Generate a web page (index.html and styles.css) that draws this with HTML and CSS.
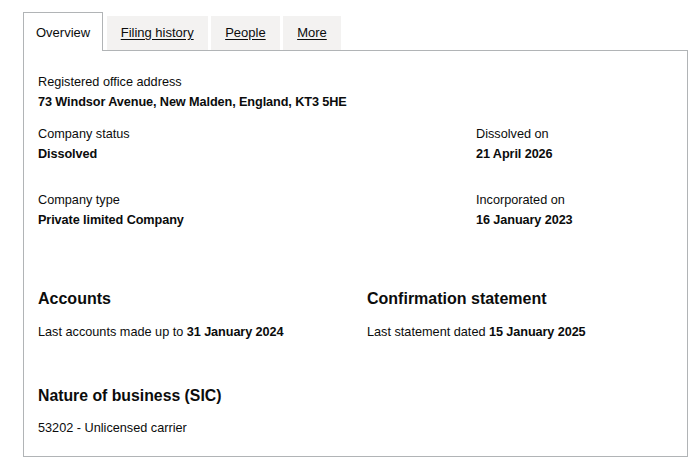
FILE: index.html
```html
<!DOCTYPE html>
<html lang="en">
<head>
<meta charset="utf-8">
<title>Company overview</title>
<link rel="stylesheet" href="styles.css">
</head>
<body>
<div class="page">
  <ul class="tabs">
    <li class="tab tab-active"><span>Overview</span></li>
    <li class="tab"><a href="#">Filing history</a></li>
    <li class="tab"><a href="#">People</a></li>
    <li class="tab"><a href="#">More</a></li>
  </ul>
  <div class="panel">
    <dl class="field field-address">
      <dt>Registered office address</dt>
      <dd>73 Windsor Avenue, New Malden, England, KT3 5HE</dd>
    </dl>
    <div class="row row-status">
      <dl class="field col-main">
        <dt>Company status</dt>
        <dd>Dissolved</dd>
      </dl>
      <dl class="field col-side">
        <dt>Dissolved on</dt>
        <dd>21 April 2026</dd>
      </dl>
    </div>
    <div class="row row-type">
      <dl class="field col-main">
        <dt>Company type</dt>
        <dd>Private limited Company</dd>
      </dl>
      <dl class="field col-side">
        <dt>Incorporated on</dt>
        <dd>16 January 2023</dd>
      </dl>
    </div>
    <div class="row row-half">
      <section class="half">
        <h2>Accounts</h2>
        <p>Last accounts made up to <strong>31 January 2024</strong></p>
      </section>
      <section class="half half-right">
        <h2>Confirmation statement</h2>
        <p>Last statement dated <strong>15 January 2025</strong></p>
      </section>
    </div>
    <section class="sic">
      <h2>Nature of business (SIC)</h2>
      <p>53202 - Unlicensed carrier</p>
    </section>
  </div>
</div>
</body>
</html>
```
FILE: styles.css
```css
* { box-sizing: border-box; }
html, body { margin: 0; padding: 0; background: #ffffff; }
body {
  font-family: "Liberation Sans", Arial, sans-serif;
  font-size: 12.7px;
  line-height: 20px;
  color: #0b0c0c;
}
.page {
  padding: 12px 2px 0 23px;
}
.tabs {
  list-style: none;
  margin: 0;
  padding: 0;
  display: flex;
  align-items: flex-end;
  gap: 3.5px;
  font-size: 13px;
}
.tab {
  background: #f3f2f1;
  height: 34px;
  padding: 7px 14px;
  line-height: 20px;
}
.tab a {
  color: #0b0c0c;
  text-decoration: underline;
  text-underline-offset: 2px;
}
.tab-active {
  background: #ffffff;
  border: 1px solid #b1b4b6;
  border-bottom: 0;
  height: 39px;
  padding: 10px 12px 0 12px;
  margin-bottom: -1px;
  position: relative;
  z-index: 1;
}
.panel {
  border: 1px solid #b1b4b6;
  padding: 21px 14px 18px 14px;
}
.field { margin: 0; }
.field dt { margin: 0; }
.field dd { margin: 0; font-weight: bold; letter-spacing: -0.1px; }
strong { letter-spacing: -0.1px; }
.field-address { margin-bottom: 12px; }
.row { display: flex; }
.row-status { margin-bottom: 26px; }
.row-type { margin-bottom: 57px; }
.col-main { width: 438px; }
.col-side { flex: 1; }
.half { width: 329px; }
.half-right { flex: 1; }
h2 {
  margin: 0 0 11px;
  font-size: 16px;
  line-height: 24px;
  font-weight: bold;
}
p { margin: 0; }
.row-half { margin-bottom: 42px; }
.sic h2 { margin-bottom: 10px; font-size: 15.8px; }
```
